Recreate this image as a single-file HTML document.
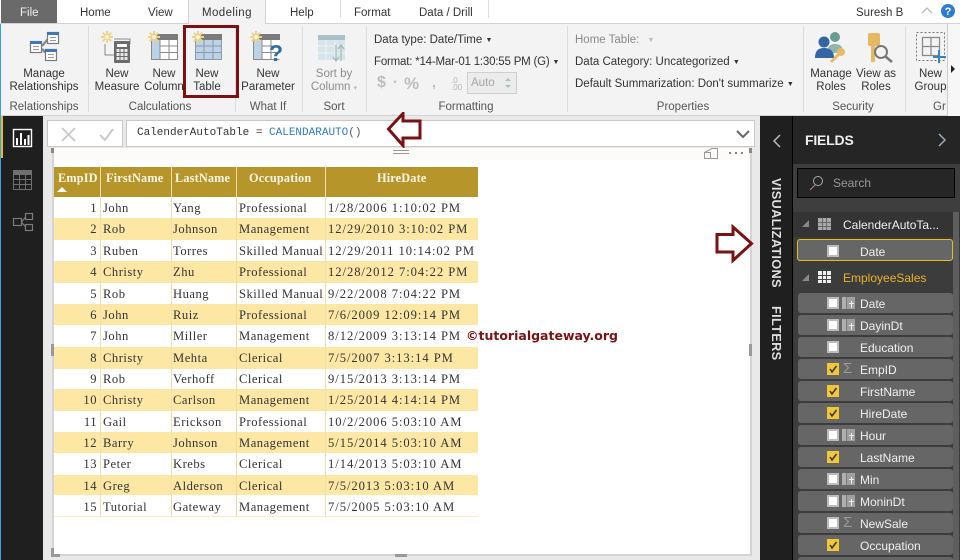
<!DOCTYPE html>
<html><head><meta charset="utf-8"><style>
*{box-sizing:border-box;margin:0;padding:0}
html,body{width:960px;height:560px;overflow:hidden;background:#e9e9e9}
body{position:relative;font-family:"Liberation Sans",sans-serif;color:#333;font-size:12px}
.a{position:absolute;white-space:nowrap}
.c{position:absolute;text-align:center;white-space:nowrap;line-height:13px;font-size:11.5px;color:#333}
.tab{position:absolute;top:7px;font-size:11.5px;color:#333;white-space:nowrap}
.sep{position:absolute;width:1px;background:#dcdcdc}
.grp{position:absolute;top:101px;font-size:11.5px;color:#555;white-space:nowrap;text-align:center}
.t{position:absolute;font-family:"Liberation Serif",serif;font-size:12.6px;letter-spacing:.5px;color:#333;white-space:nowrap;line-height:14px}
.d{letter-spacing:.95px}
.h{color:#fbf6e4;font-weight:bold;font-size:12.3px;letter-spacing:.15px}
.row{position:absolute;left:54px;width:424px}
.f{position:absolute;left:798px;width:155px;height:20px;background:#666;border-radius:3px}
.cb{position:absolute;left:29px;top:4px;width:12px;height:12px;background:#fff;border:2px solid #bbb}
.ck{position:absolute;left:29px;top:4px;width:12px;height:12px;background:#f2c832}
.fn{position:absolute;left:62px;top:4px;font-size:12px;color:#f0f0f0;white-space:nowrap}
.tp{position:absolute;left:44px;top:4px;width:13px;height:12px;background:linear-gradient(#eee,#eee) 7px 6px/5px 1px no-repeat,linear-gradient(#eee,#eee) 9px 4px/1px 7px no-repeat,linear-gradient(90deg,#b0b0b0 4px,#777 4px,#777 5px,#a0a0a0 5px)}
.sg{position:absolute;left:45px;top:1px;font-size:15px;color:#999}
</style></head><body>
<!-- title/tab bar -->
<div class="a" style="left:0;top:0;width:960px;height:24px;background:#fff"></div>
<div class="a" style="left:0;top:23px;width:960px;height:1px;background:#d2d2d2"></div>
<div class="a" style="left:1px;top:0;width:56px;height:23px;background:#6a6a6a"></div>
<div class="tab" style="left:20px;color:#eee">File</div>
<div class="tab" style="left:80px">Home</div>
<div class="tab" style="left:148px">View</div>
<div class="a" style="left:188px;top:0;width:78px;height:24px;background:#f3f3f3;border:1px solid #d2d2d2;border-top:0;border-bottom:0"></div>
<div class="tab" style="left:202px;letter-spacing:.4px">Modeling</div>
<div class="tab" style="left:290px">Help</div>
<div class="a" style="left:340px;top:0;width:1px;height:18px;background:#ddd"></div>
<div class="tab" style="left:354px">Format</div>
<div class="tab" style="left:419px">Data / Drill</div>
<div class="a" style="left:488px;top:0;width:1px;height:18px;background:#ddd"></div>
<div class="tab" style="left:856px">Suresh B</div>
<svg class="a" style="left:920px;top:0" width="40" height="22"><path d="M2 13L7 8L12 13" fill="none" stroke="#bbb" stroke-width="1.3"/><circle cx="28" cy="11" r="7" fill="#2b7cd3"/><text x="28" y="15" font-size="11" font-weight="bold" fill="#fff" text-anchor="middle" font-family="Liberation Sans">?</text></svg>
<!-- ribbon -->
<div class="a" style="left:0;top:24px;width:960px;height:92px;background:#f3f3f3"></div>
<div class="a" style="left:0;top:115px;width:960px;height:1px;background:#d5d5d5"></div>
<div class="a" style="left:0;top:24px;width:1px;height:536px;background:#3aa0e8"></div>
<div class="sep" style="left:88px;top:26px;height:86px"></div>
<div class="sep" style="left:235px;top:26px;height:86px"></div>
<div class="sep" style="left:302px;top:26px;height:86px"></div>
<div class="sep" style="left:366px;top:26px;height:86px"></div>
<div class="sep" style="left:567px;top:26px;height:86px"></div>
<div class="sep" style="left:803px;top:26px;height:86px"></div>
<div class="sep" style="left:905px;top:26px;height:86px"></div>

<!-- Manage relationships icon -->
<svg class="a" style="left:28px;top:30px" width="34" height="34">
<path d="M14 16L20 9M14 19L19 24" stroke="#888" stroke-width="2.400"/>
<g fill="#fff" stroke="#7a7a7a" stroke-width="1.200"><rect x="2.500" y="11.500" width="11" height="11"/><rect x="19.500" y="2.500" width="11" height="11"/><rect x="17.500" y="19.500" width="11" height="11"/></g>
<g fill="#3f78b5"><rect x="2" y="11" width="12" height="3"/><rect x="19" y="2" width="12" height="3"/><rect x="17" y="19" width="12" height="3"/></g>
<path d="M5 16.500H11M5 19.500H11M22 7.500H28M22 10.500H28M20 24.500H26M20 27.500H26" stroke="#999"/>
</svg>
<div class="c" style="left:4px;top:68px;width:80px">Manage<br>Relationships</div>
<div class="grp" style="left:9px;width:70px">Relationships</div>

<svg width="0" height="0" style="position:absolute"><defs><g id="st" stroke="#efd38b" stroke-width="2" fill="none"><path d="M0 -6V6M-6 0H6M-4.200 -4.200L4.200 4.200M-4.200 4.200L4.200 -4.200"/><circle r="2.500" fill="#fdf5dc" stroke="#efd38b" stroke-width="1"/></g></defs></svg>

<!-- New Measure -->
<svg class="a" style="left:100px;top:30px" width="34" height="34">
<path d="M5 14V25H14M14 9H30V14" fill="none" stroke="#8a8a8a" stroke-width="1"/>
<rect x="14" y="11" width="16" height="22" rx="1" fill="#6b6b6b"/><rect x="17" y="14" width="10" height="3" fill="#fff"/>
<g fill="#e8e8e8"><rect x="16.500" y="19" width="3" height="3"/><rect x="20.500" y="19" width="3" height="3"/><rect x="24.500" y="19" width="3" height="3"/><rect x="16.500" y="23" width="3" height="3"/><rect x="20.500" y="23" width="3" height="3"/><rect x="24.500" y="23" width="3" height="3"/><rect x="16.500" y="27" width="3" height="3"/><rect x="20.500" y="27" width="3" height="3"/><rect x="24.500" y="27" width="3" height="3"/></g>
<use href="#st" x="7" y="7"/></svg>
<div class="c" style="left:92px;top:68px;width:50px">New<br>Measure</div>

<!-- New Column -->
<svg class="a" style="left:148px;top:30px" width="34" height="34">
<rect x="3" y="4" width="27" height="6" fill="#7b7b7b"/><rect x="3" y="10" width="9" height="19" fill="#bcd2e6"/><rect x="12" y="10" width="18" height="19" fill="#fff"/>
<path d="M3.500 10V29.500H29.500V10M12 10V29M21 10V29M12 16H30M12 22.500H30" fill="none" stroke="#8a8a8a"/>
<use href="#st" x="6" y="7"/></svg>
<div class="c" style="left:144px;top:68px;width:40px;overflow:hidden">New<br>Column</div>

<!-- New Table -->
<svg class="a" style="left:192px;top:30px" width="34" height="34">
<rect x="3" y="4" width="27" height="6" fill="#7b7b7b"/><rect x="3" y="10" width="27" height="19" fill="#bcd2e6"/>
<path d="M3.500 10V29.500H29.500V10M12 10V29M21 10V29M3 16H30M3 22.500H30" fill="none" stroke="#8a9aa8"/>
<use href="#st" x="6" y="7"/></svg>
<div class="c" style="left:187px;top:68px;width:40px">New<br>Table</div>
<div class="a" style="left:183px;top:25px;width:56px;height:73px;border:3px solid #7b1113"></div>
<div class="grp" style="left:120px;width:80px">Calculations</div>

<!-- New Parameter -->
<svg class="a" style="left:250px;top:30px" width="36" height="36">
<rect x="3" y="4" width="27" height="6" fill="#7b7b7b"/><rect x="3" y="10" width="9" height="19" fill="#bcd2e6"/><rect x="12" y="10" width="18" height="19" fill="#fff"/>
<path d="M3.500 10V29.500H29.500M12 10V29M21 10V29M12 16H30M12 22.500H30" fill="none" stroke="#8a8a8a"/>
<use href="#st" x="6" y="7"/>
<text x="26" y="31" font-size="23" font-weight="bold" fill="#2e6ea8" text-anchor="middle" font-family="Liberation Sans">?</text></svg>
<div class="c" style="left:238px;top:68px;width:60px">New<br>Parameter</div>
<div class="grp" style="left:238px;width:60px">What If</div>

<!-- Sort -->
<svg class="a" style="left:316px;top:33px" width="32" height="32">
<rect x="2" y="2" width="27" height="5" fill="#a9c2c8"/><rect x="2" y="7" width="27" height="20" fill="#d7e4ea"/>
<path d="M2 13H29M2 20H29M10 7V27M19 7V27" stroke="#eef3f5"/>
<path d="M20 12V28M17 24L20 28L23 24M25 28V13M22 16L25 12L28 16" fill="none" stroke="#9fb8b4" stroke-width="1.200"/></svg>
<div class="c" style="left:304px;top:68px;width:60px;color:#8c8c8c">Sort by<br>Column <span style="font-size:7px;color:#bbb">▾</span></div>
<div class="grp" style="left:314px;width:40px">Sort</div>

<!-- Formatting -->
<div class="a" style="left:374px;top:34px;font-size:11.500px">Data type: Date/Time <span style="font-size:7px;position:relative;top:-1px">▼</span></div>
<div class="a" style="left:374px;top:56px;font-size:11.500px;letter-spacing:-.2px">Format: *14-Mar-01 1:30:55 PM (G) <span style="font-size:7px;position:relative;top:-1px">▼</span></div>
<div class="a" style="left:377px;top:74px;font-size:16px;font-weight:bold;color:#bdbdbd">$</div>
<div class="a" style="left:392px;top:80px;font-size:6px;color:#c5c5c5">▼</div>
<div class="a" style="left:404px;top:74px;font-size:17px;font-weight:bold;color:#bdbdbd">%</div>
<div class="a" style="left:432px;top:74px;font-size:14px;font-weight:bold;color:#bdbdbd">,</div>
<div class="a" style="left:451px;top:77px;font-size:8px;color:#b5b5b5;line-height:7px">.0<br>.00</div>
<div class="a" style="left:467px;top:72px;width:50px;height:22px;background:#ececec;border:1px solid #cfcfcf;color:#a5a5a5;font-size:11.500px;padding:4px 3px">Auto</div>
<svg class="a" style="left:503px;top:76px" width="10" height="14"><path d="M2 5L5 2L8 5ZM2 9L5 12L8 9Z" fill="#a8c0b8"/></svg>
<div class="grp" style="left:426px;width:80px">Formatting</div>

<!-- Properties -->
<div class="a" style="left:575px;top:34px;font-size:11.500px;color:#8a8a8a">Home Table: <span style="font-size:7px;color:#bbb;margin-left:5px;position:relative;top:-1px">▼</span></div>
<div class="a" style="left:575px;top:56px;font-size:11.500px">Data Category: Uncategorized <span style="font-size:7px;position:relative;top:-1px">▼</span></div>
<div class="a" style="left:575px;top:78px;font-size:11.500px">Default Summarization: Don't summarize <span style="font-size:7px;position:relative;top:-1px">▼</span></div>
<div class="grp" style="left:648px;width:70px">Properties</div>

<!-- Security -->
<svg class="a" style="left:812px;top:30px" width="36" height="36">
<circle cx="23" cy="7" r="5" fill="#6a9c94"/><path d="M15 24C15 15 20 14 23 14S31 15 31 22" fill="#8fb5ae"/>
<circle cx="12" cy="12" r="5.500" fill="#3465a4"/><path d="M3 28C3 20 7 18 12 18S22 20 22 28Z" fill="#3465a4"/>
<circle cx="29" cy="22" r="4" fill="#e8bc65"/><path d="M27 24L19 32" stroke="#e8bc65" stroke-width="3"/></svg>
<div class="c" style="left:806px;top:68px;width:50px">Manage<br>Roles</div>
<svg class="a" style="left:864px;top:30px" width="30" height="36">
<rect x="4" y="3" width="12" height="13" rx="2" fill="#e5b861"/><path d="M9 14V32" stroke="#e5b861" stroke-width="4"/>
<circle cx="17" cy="22" r="6" fill="#f3f3f3" stroke="#777" stroke-width="2"/><path d="M21.500 26.500L28 32" stroke="#777" stroke-width="2.500"/></svg>
<div class="c" style="left:852px;top:68px;width:48px">View as<br>Roles</div>
<div class="grp" style="left:823px;width:60px">Security</div>
<svg class="a" style="left:914px;top:30px" width="33" height="34">
<rect x="2.500" y="2.500" width="28" height="28" fill="none" stroke="#777" stroke-dasharray="2 2"/>
<path d="M8.500 7.500H25.500V25.500H8.500ZM17 7.500V25.500M8.500 16.500H25.500" fill="none" stroke="#888" stroke-width="1.200"/>
<path d="M25 20V33M19 27H32" stroke="#3b82b8" stroke-width="2"/></svg>
<div class="c" style="left:914px;top:68px;width:33px;overflow:hidden">New<br>Group</div>
<div class="grp" style="left:933px;width:14px;overflow:hidden;text-align:left">Gr</div>
<div class="a" style="left:947px;top:24px;width:13px;height:92px;background:#f7f7f7;border-left:1px solid #ccc"></div>
<svg class="a" style="left:949px;top:64px" width="8" height="10"><path d="M2 1L6 5L2 9Z" fill="#222"/></svg>

<!-- left nav -->
<div class="a" style="left:1px;top:116px;width:42px;height:444px;background:#1f1f1f"></div>
<div class="a" style="left:1px;top:116px;width:2px;height:42px;background:#eabb26"></div>
<svg class="a" style="left:12px;top:128px" width="22" height="22"><rect x="1.500" y="1.500" width="18" height="17" fill="none" stroke="#fff" stroke-width="1.400"/><path d="M5 17V10M9 17V5M13 17V11M16.500 17V7" stroke="#fff" stroke-width="2"/></svg>
<svg class="a" style="left:12px;top:169px" width="22" height="22"><rect x="1.500" y="1.500" width="18" height="19" fill="none" stroke="#6f6f6f"/><rect x="1" y="1" width="19" height="5" fill="#6f6f6f"/><path d="M7.500 6V20M13.500 6V20M2 10.500H20M2 15.500H20" stroke="#6f6f6f"/></svg>
<svg class="a" style="left:12px;top:212px" width="22" height="22"><g fill="none" stroke="#7a7a7a" stroke-width="1.200"><rect x="1.500" y="6.500" width="8" height="7"/><rect x="13.500" y="1.500" width="7" height="6"/><rect x="13.500" y="12.500" width="7" height="6"/><path d="M9.500 10L13.500 5M9.500 10L13.500 15"/></g></svg>

<!-- canvas -->
<div class="a" style="left:43px;top:116px;width:717px;height:444px;background:#e9e9e9"></div>
<div class="a" style="left:47px;top:120px;width:76px;height:27px;background:#fff;border:1px solid #c8c8c8"></div>
<svg class="a" style="left:58px;top:125px" width="60" height="18"><path d="M4 3L17 16M17 3L4 16" stroke="#c9c9c9" stroke-width="1.800"/><path d="M42 10L47 15L55 4" fill="none" stroke="#c9c9c9" stroke-width="2"/></svg>
<div class="a" style="left:126px;top:120px;width:629px;height:27px;background:#fff;border:1px solid #c8c8c8"></div>
<div class="a" style="left:137px;top:127px;font-family:'Liberation Mono',monospace;font-size:11px;color:#333">CalenderAutoTable = <span style="color:#2f7dbd">CALENDARAUTO</span><span style="color:#555">()</span></div>
<svg class="a" style="left:735px;top:128px" width="16" height="12"><path d="M2 3L8 9L14 3" fill="none" stroke="#666" stroke-width="2"/></svg>
<div class="a" style="left:52px;top:148px;width:700px;height:408px;background:#fff;border-left:2px solid #d4d4d4;border-right:2px solid #d4d4d4;border-bottom:2px solid #d4d4d4"></div>
<div class="a" style="left:54px;top:148px;width:696px;height:12px;background:#fcfbf9"></div>
<div class="a" style="left:393px;top:150px;width:16px;height:4px;border-top:1px solid #999;border-bottom:1px solid #999"></div>
<svg class="a" style="left:703px;top:147px" width="18" height="13"><path d="M1.500 5.500H7.500V11.500H1.500ZM7.500 11.500H14.500V1.500H9L1.500 5.500" fill="none" stroke="#999"/></svg>
<div class="a" style="left:729px;top:152px;width:2px;height:2px;background:#888"></div>
<div class="a" style="left:735px;top:152px;width:2px;height:2px;background:#888"></div>
<div class="a" style="left:741px;top:152px;width:2px;height:2px;background:#888"></div>
<div class="a" style="left:51px;top:148px;width:3px;height:5px;background:#888"></div>
<div class="a" style="left:749px;top:148px;width:3px;height:5px;background:#888"></div>
<div class="a" style="left:51px;top:344px;width:3px;height:12px;background:#999"></div>
<div class="a" style="left:749px;top:344px;width:3px;height:12px;background:#999"></div>
<div class="a" style="left:51px;top:548px;width:3px;height:9px;background:#999"></div>
<div class="a" style="left:51px;top:554px;width:9px;height:3px;background:#999"></div>
<div class="a" style="left:395px;top:554px;width:12px;height:3px;background:#999"></div>

<!-- table -->
<div class="row" style="top:167px;height:30px;background:#b6952b"></div>
<div class="row" style="top:218px;height:22px;background:#fde7a5"></div>
<div class="row" style="top:261px;height:22px;background:#fde7a5"></div>
<div class="row" style="top:304px;height:21px;background:#fde7a5"></div>
<div class="row" style="top:347px;height:22px;background:#fde7a5"></div>
<div class="row" style="top:389px;height:22px;background:#fde7a5"></div>
<div class="row" style="top:432px;height:21px;background:#fde7a5"></div>
<div class="row" style="top:475px;height:20px;background:#fde7a5"></div>
<div class="row" style="top:516px;height:1px;background:#fbefca"></div>
<div class="a" style="left:100px;top:167px;width:1px;height:350px;background:#f0dfae"></div>
<div class="a" style="left:171px;top:167px;width:1px;height:350px;background:#f0dfae"></div>
<div class="a" style="left:236px;top:167px;width:1px;height:350px;background:#eed9a0"></div>
<div class="a" style="left:325px;top:167px;width:1px;height:350px;background:#f0dfae"></div>
<div class="t h" style="left:58px;top:171px">EmpID</div>
<svg class="a" style="left:56px;top:186px" width="12" height="7"><path d="M1 6L6 1L11 6Z" fill="#fff"/></svg>
<div class="t h" style="left:106px;top:171px">FirstName</div>
<div class="t h" style="left:175px;top:171px">LastName</div>
<div class="t h" style="left:249px;top:171px">Occupation</div>
<div class="t h" style="left:377px;top:171px">HireDate</div>
<div class="t" style="left:54px;width:43px;text-align:right;top:201px">1</div><div class="t" style="left:103px;top:201px">John</div><div class="t" style="left:173px;top:201px">Yang</div><div class="t" style="left:239px;top:201px">Professional</div><div class="t d" style="left:328px;top:201px">1/28/2006 1:10:02 PM</div>
<div class="t" style="left:54px;width:43px;text-align:right;top:222px">2</div><div class="t" style="left:103px;top:222px">Rob</div><div class="t" style="left:173px;top:222px">Johnson</div><div class="t" style="left:239px;top:222px">Management</div><div class="t d" style="left:328px;top:222px">12/29/2010 3:10:02 PM</div>
<div class="t" style="left:54px;width:43px;text-align:right;top:244px">3</div><div class="t" style="left:103px;top:244px">Ruben</div><div class="t" style="left:173px;top:244px">Torres</div><div class="t" style="left:239px;top:244px">Skilled Manual</div><div class="t d" style="left:328px;top:244px">12/29/2011 10:14:02 PM</div>
<div class="t" style="left:54px;width:43px;text-align:right;top:265px">4</div><div class="t" style="left:103px;top:265px">Christy</div><div class="t" style="left:173px;top:265px">Zhu</div><div class="t" style="left:239px;top:265px">Professional</div><div class="t d" style="left:328px;top:265px">12/28/2012 7:04:22 PM</div>
<div class="t" style="left:54px;width:43px;text-align:right;top:287px">5</div><div class="t" style="left:103px;top:287px">Rob</div><div class="t" style="left:173px;top:287px">Huang</div><div class="t" style="left:239px;top:287px">Skilled Manual</div><div class="t d" style="left:328px;top:287px">9/22/2008 7:04:22 PM</div>
<div class="t" style="left:54px;width:43px;text-align:right;top:308px">6</div><div class="t" style="left:103px;top:308px">John</div><div class="t" style="left:173px;top:308px">Ruiz</div><div class="t" style="left:239px;top:308px">Professional</div><div class="t d" style="left:328px;top:308px">7/6/2009 12:09:14 PM</div>
<div class="t" style="left:54px;width:43px;text-align:right;top:329px">7</div><div class="t" style="left:103px;top:329px">John</div><div class="t" style="left:173px;top:329px">Miller</div><div class="t" style="left:239px;top:329px">Management</div><div class="t d" style="left:328px;top:329px">8/12/2009 3:13:14 PM</div>
<div class="t" style="left:54px;width:43px;text-align:right;top:351px">8</div><div class="t" style="left:103px;top:351px">Christy</div><div class="t" style="left:173px;top:351px">Mehta</div><div class="t" style="left:239px;top:351px">Clerical</div><div class="t d" style="left:328px;top:351px">7/5/2007 3:13:14 PM</div>
<div class="t" style="left:54px;width:43px;text-align:right;top:372px">9</div><div class="t" style="left:103px;top:372px">Rob</div><div class="t" style="left:173px;top:372px">Verhoff</div><div class="t" style="left:239px;top:372px">Clerical</div><div class="t d" style="left:328px;top:372px">9/15/2013 3:13:14 PM</div>
<div class="t" style="left:54px;width:43px;text-align:right;top:393px">10</div><div class="t" style="left:103px;top:393px">Christy</div><div class="t" style="left:173px;top:393px">Carlson</div><div class="t" style="left:239px;top:393px">Management</div><div class="t d" style="left:328px;top:393px">1/25/2014 4:14:14 PM</div>
<div class="t" style="left:54px;width:43px;text-align:right;top:415px">11</div><div class="t" style="left:103px;top:415px">Gail</div><div class="t" style="left:173px;top:415px">Erickson</div><div class="t" style="left:239px;top:415px">Professional</div><div class="t d" style="left:328px;top:415px">10/2/2006 5:03:10 AM</div>
<div class="t" style="left:54px;width:43px;text-align:right;top:436px">12</div><div class="t" style="left:103px;top:436px">Barry</div><div class="t" style="left:173px;top:436px">Johnson</div><div class="t" style="left:239px;top:436px">Management</div><div class="t d" style="left:328px;top:436px">5/15/2014 5:03:10 AM</div>
<div class="t" style="left:54px;width:43px;text-align:right;top:457px">13</div><div class="t" style="left:103px;top:457px">Peter</div><div class="t" style="left:173px;top:457px">Krebs</div><div class="t" style="left:239px;top:457px">Clerical</div><div class="t d" style="left:328px;top:457px">1/14/2013 5:03:10 AM</div>
<div class="t" style="left:54px;width:43px;text-align:right;top:479px">14</div><div class="t" style="left:103px;top:479px">Greg</div><div class="t" style="left:173px;top:479px">Alderson</div><div class="t" style="left:239px;top:479px">Clerical</div><div class="t d" style="left:328px;top:479px">7/5/2013 5:03:10 AM</div>
<div class="t" style="left:54px;width:43px;text-align:right;top:500px">15</div><div class="t" style="left:103px;top:500px">Tutorial</div><div class="t" style="left:173px;top:500px">Gateway</div><div class="t" style="left:239px;top:500px">Management</div><div class="t d" style="left:328px;top:500px">7/5/2005 5:03:10 AM</div>

<div class="a" style="left:466px;top:328px;font-weight:bold;color:#7b1113;font-family:'DejaVu Sans',sans-serif;font-size:12.500px">©tutorialgateway.org</div>

<!-- red arrows -->
<svg class="a" style="left:386px;top:112px" width="37" height="36"><path d="M2.500 17L17 1.500V9H34V26H17V33.500Z" fill="#fff" stroke="#7b1113" stroke-width="3"/></svg>
<svg class="a" style="left:714px;top:224px" width="40" height="40"><path d="M3 10.500H19V3L37.500 19.500L19 36.500V28H3Z" fill="#fff" stroke="#7b1113" stroke-width="3"/></svg>

<!-- right panels -->
<div class="a" style="left:760px;top:116px;width:33px;height:444px;background:#1f1f1f"></div>
<div class="a" style="left:792px;top:116px;width:1px;height:444px;background:#000"></div>
<svg class="a" style="left:771px;top:133px" width="12" height="16"><path d="M9 2L3 8L9 14" fill="none" stroke="#bbb" stroke-width="1.500"/></svg>
<div class="a" style="left:775px;top:178px;transform-origin:0 0;transform:translateX(8px) rotate(90deg);font-size:12.800px;font-weight:bold;color:#ddd;letter-spacing:.3px;line-height:14px">VISUALIZATIONS</div>
<div class="a" style="left:775px;top:306px;transform-origin:0 0;transform:translateX(8px) rotate(90deg);font-size:12.800px;font-weight:bold;color:#ddd;letter-spacing:.3px;line-height:14px">FILTERS</div>
<div class="a" style="left:793px;top:116px;width:167px;height:444px;background:#2d2d2d"></div>
<div class="a" style="left:793px;top:116px;width:167px;height:48px;background:#252525"></div>
<div class="a" style="left:805px;top:132px;font-size:14px;font-weight:bold;color:#eee;letter-spacing:-.2px">FIELDS</div>
<svg class="a" style="left:936px;top:132px" width="12" height="16"><path d="M3 2L9 8L3 14" fill="none" stroke="#9ab" stroke-width="1.500"/></svg>
<div class="a" style="left:793px;top:164px;width:167px;height:48px;background:#3e3e3e"></div>
<div class="a" style="left:797px;top:168px;width:158px;height:30px;background:#262626;border:1px solid #000"></div>
<svg class="a" style="left:808px;top:175px" width="18" height="16"><circle cx="10" cy="6" r="4.500" fill="none" stroke="#aaa"/><path d="M7 10L2 15" stroke="#a77" stroke-width="1.200"/></svg>
<div class="a" style="left:833px;top:176px;font-size:12px;color:#999">Search</div>
<div class="a" style="left:793px;top:212px;width:167px;height:348px;background:#3c3c3c"></div>
<div class="a" style="left:793px;top:212px;width:167px;height:25px;background:#343434"></div>
<div class="a" style="left:953px;top:212px;width:6px;height:348px;background:#5e5e5e"></div>
<svg class="a" style="left:801px;top:219px" width="10" height="10"><path d="M8 1V8H1Z" fill="#888"/></svg>
<svg class="a" style="left:818px;top:218px" width="14" height="13"><rect width="13" height="12" fill="#aaa"/><path d="M4.500 0V12M8.500 0V12M0 4.500H13M0 8.500H13" stroke="#666"/></svg>
<div class="a" style="left:843px;top:218px;font-size:12px;color:#f0f0f0">CalenderAutoTa...</div>
<div class="a" style="left:797px;top:239px;width:156px;height:22px;background:#666;border:1px solid #e8bb2e;border-radius:3px"></div>
<div class="a" style="left:827px;top:245px;width:12px;height:12px;background:#fff;border:2px solid #bbb"></div>
<div class="a" style="left:860px;top:245px;font-size:12px;color:#f0f0f0">Date</div>
<svg class="a" style="left:801px;top:273px" width="10" height="10"><path d="M8 1V8H1Z" fill="#888"/></svg>
<svg class="a" style="left:818px;top:271px" width="14" height="13"><rect width="13" height="12" fill="#eee"/><path d="M4.500 0V12M8.500 0V12M0 4.500H13M0 8.500H13" stroke="#444"/></svg>
<div class="a" style="left:843px;top:271px;font-size:12px;color:#e9b42c">EmployeeSales</div>

<div class="f" style="top:293px"><div class="cb"></div><div class="tp"></div><div class="fn">Date</div></div>
<div class="f" style="top:315px"><div class="cb"></div><div class="tp"></div><div class="fn">DayinDt</div></div>
<div class="f" style="top:337px"><div class="cb"></div><div class="fn">Education</div></div>
<div class="f" style="top:359px"><div class="ck"></div><div class="sg">Σ</div><div class="fn">EmpID</div></div>
<div class="f" style="top:381px"><div class="ck"></div><div class="fn">FirstName</div></div>
<div class="f" style="top:403px"><div class="ck"></div><div class="fn">HireDate</div></div>
<div class="f" style="top:425px"><div class="cb"></div><div class="tp"></div><div class="fn">Hour</div></div>
<div class="f" style="top:447px"><div class="ck"></div><div class="fn">LastName</div></div>
<div class="f" style="top:469px"><div class="cb"></div><div class="tp"></div><div class="fn">Min</div></div>
<div class="f" style="top:491px"><div class="cb"></div><div class="tp"></div><div class="fn">MoninDt</div></div>
<div class="f" style="top:513px"><div class="cb"></div><div class="sg">Σ</div><div class="fn">NewSale</div></div>
<div class="f" style="top:535px"><div class="ck"></div><div class="fn">Occupation</div></div>
<div class="f" style="top:557px"></div>
<svg class="a" style="left:827px;top:363px" width="12" height="12"><path d="M3 6L5 9L9.500 3" fill="none" stroke="#333" stroke-width="1.500"/></svg>
<svg class="a" style="left:827px;top:385px" width="12" height="12"><path d="M3 6L5 9L9.500 3" fill="none" stroke="#333" stroke-width="1.500"/></svg>
<svg class="a" style="left:827px;top:407px" width="12" height="12"><path d="M3 6L5 9L9.500 3" fill="none" stroke="#333" stroke-width="1.500"/></svg>
<svg class="a" style="left:827px;top:451px" width="12" height="12"><path d="M3 6L5 9L9.500 3" fill="none" stroke="#333" stroke-width="1.500"/></svg>
<svg class="a" style="left:827px;top:539px" width="12" height="12"><path d="M3 6L5 9L9.500 3" fill="none" stroke="#333" stroke-width="1.500"/></svg>
</body></html>
